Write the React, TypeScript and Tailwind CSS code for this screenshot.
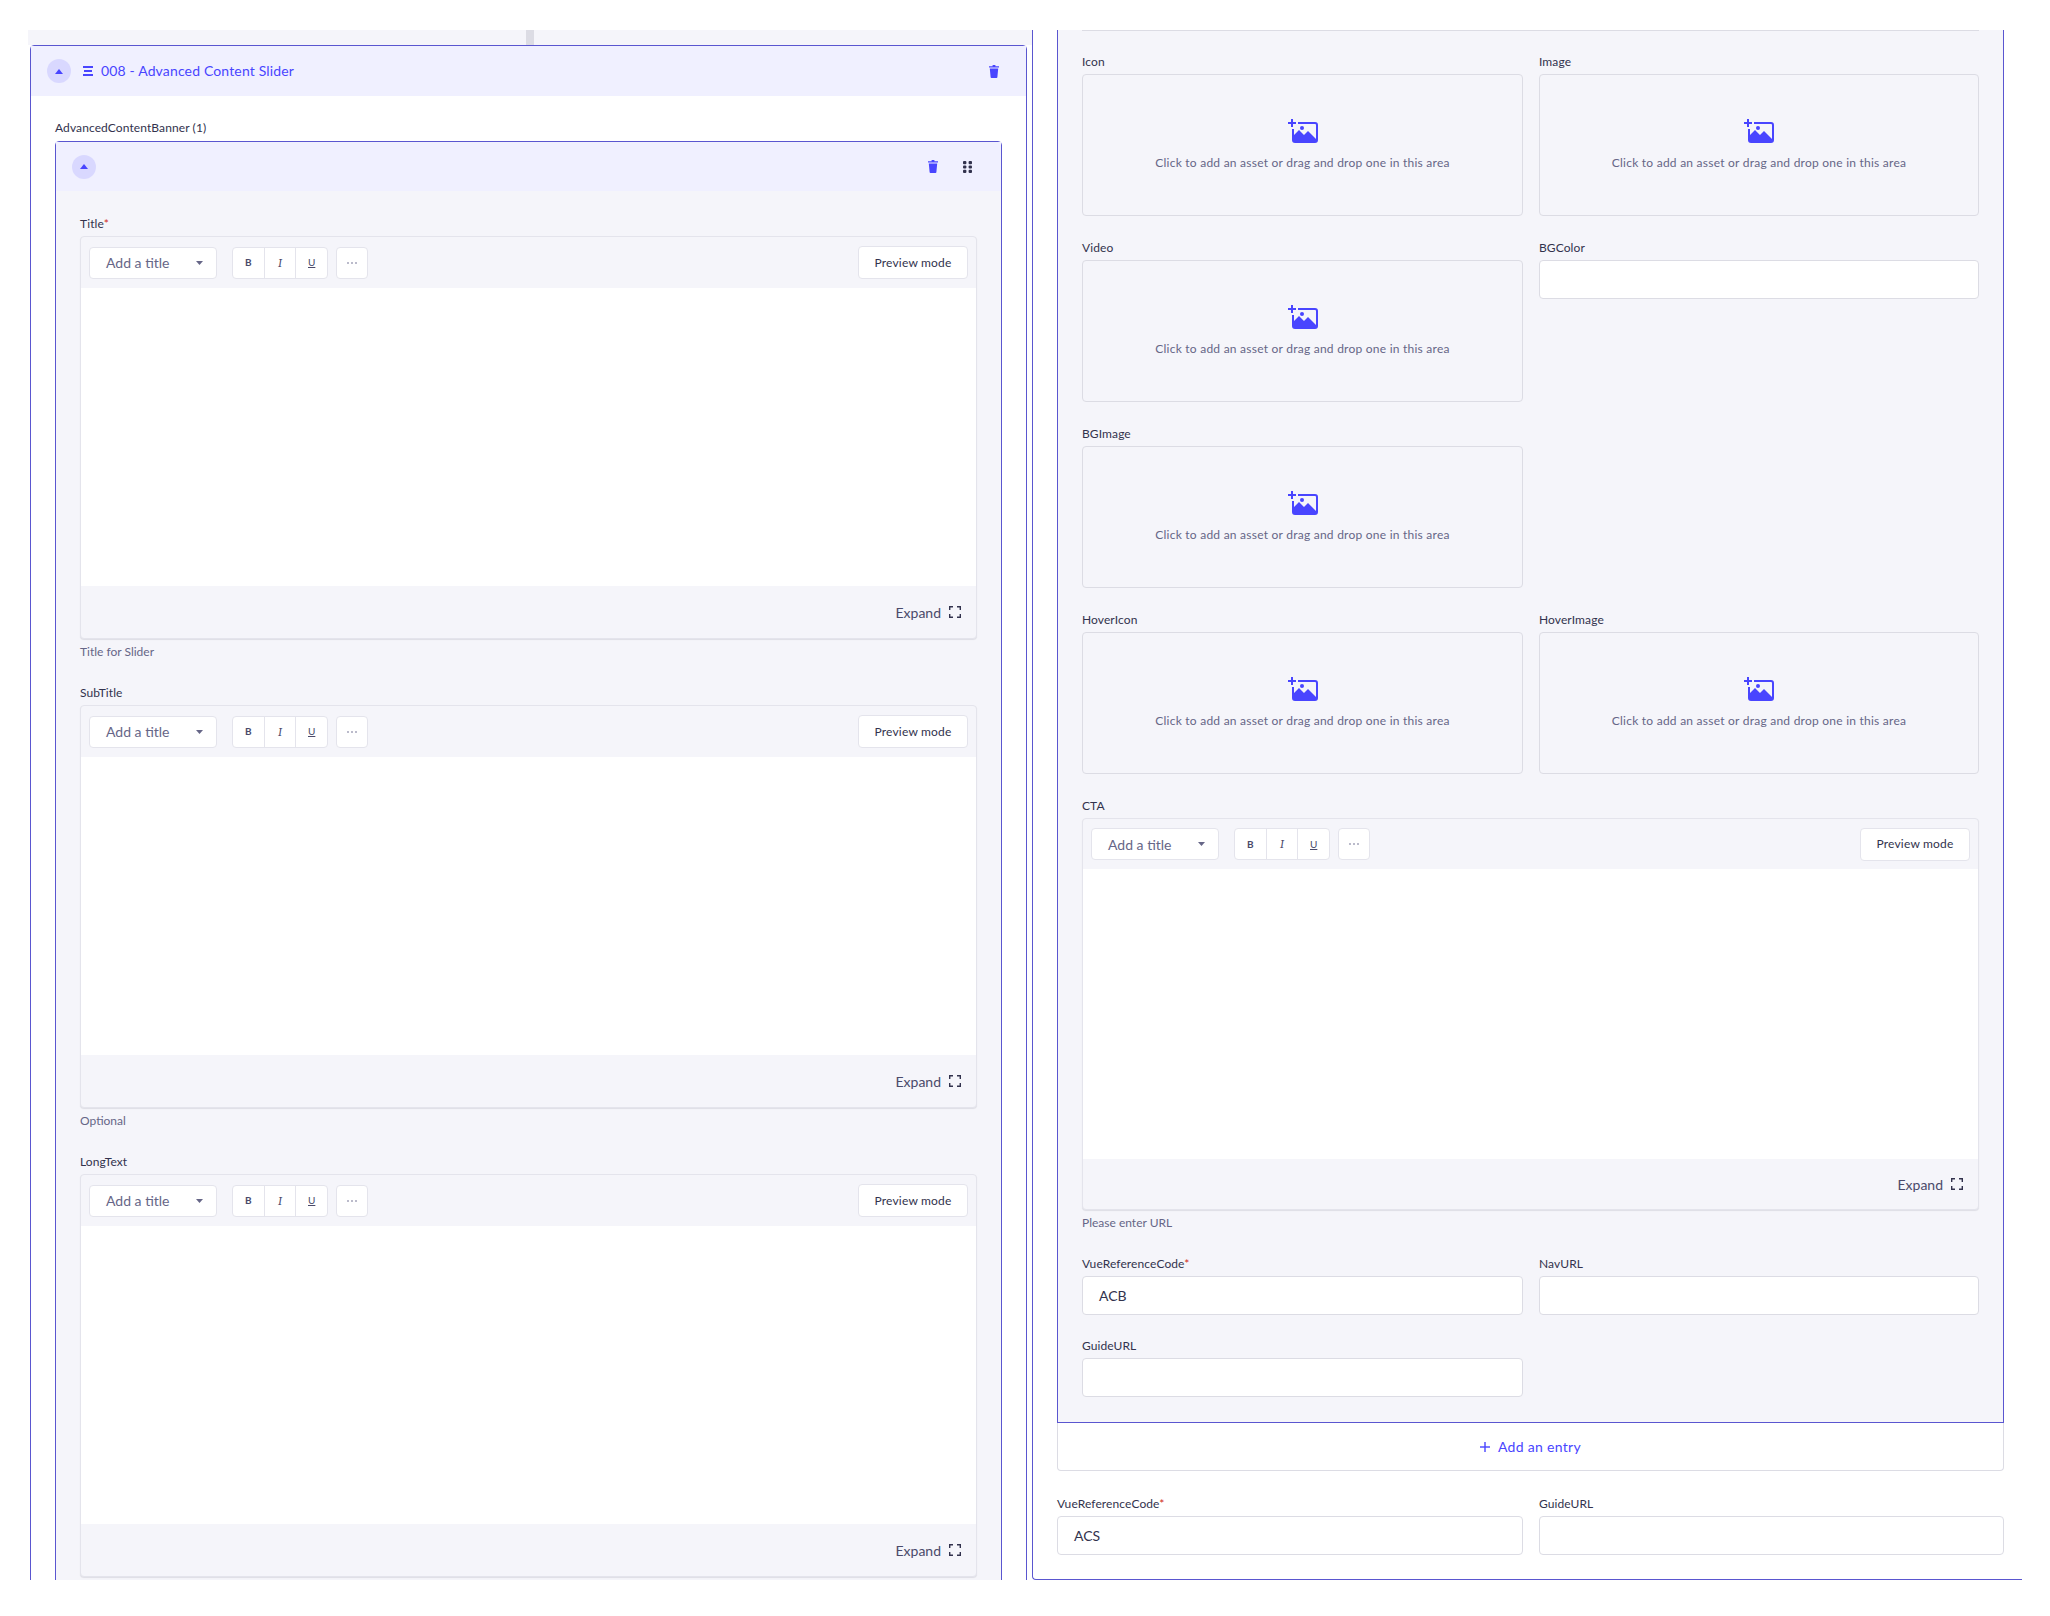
import { ReactNode } from "react";

function Caret() {
  return (
    <svg width="8" height="5" viewBox="0 0 8 5">
      <path d="M4 0L8 5H0z" fill="#4945ff" />
    </svg>
  );
}

function Trash({ className }: { className?: string }) {
  return (
    <svg width="10" height="13" viewBox="0 0 10 13" className={className}>
      <path d="M3.6 0h2.8v1.2H10v1.4H0V1.2h3.6z" fill="#4945ff" />
      <path d="M.8 3.6h8.4l-.8 8.5a.9.9 0 0 1-.9.9H2.500a.9.9 0 0 1-.9-.9z" fill="#4945ff" />
    </svg>
  );
}

function Drag() {
  return (
    <svg width="9" height="12" viewBox="0 0 9 12" fill="#32324d">
      <rect x="0" y="0" width="3.4" height="3.2" rx="1" />
      <rect x="5.6" y="0" width="3.4" height="3.2" rx="1" />
      <rect x="0" y="4.4" width="3.4" height="3.2" rx="1" />
      <rect x="5.6" y="4.4" width="3.4" height="3.2" rx="1" />
      <rect x="0" y="8.8" width="3.4" height="3.2" rx="1" />
      <rect x="5.6" y="8.8" width="3.4" height="3.2" rx="1" />
    </svg>
  );
}

function ImagePlus() {
  return (
    <svg width="30" height="24" viewBox="0 0 30 24" fill="none">
      <path d="M3 0h2v3h3v2H5v3H3V5H0V3h3z" fill="#4945ff" />
      <path
        d="M10 3h17a3 3 0 0 1 3 3v15a3 3 0 0 1-3 3H7a3 3 0 0 1-3-3V10h2v6l5-5 5 5 4-4 8 8V6a1 1 0 0 0-1-1H10z"
        fill="#4945ff"
      />
      <circle cx="14" cy="9" r="2" fill="#4945ff" />
    </svg>
  );
}

function ExpandIcon() {
  return (
    <svg width="12" height="12" viewBox="0 0 12 12" fill="none" stroke="#32324d" strokeWidth="1.4">
      <path d="M.7 4V.7H4M8 .7h3.3V4M11.3 8v3.3H8M4 11.3H.7V8" />
    </svg>
  );
}

function Label({ text, required }: { text: string; required?: boolean }) {
  return (
    <div className="h-[17px] pt-[1px] mb-[4px] text-[12px] leading-[16px] tracking-[0.1px] text-[#32324d]">
      {text}
      {required && <span className="text-[#d02b20]">*</span>}
    </div>
  );
}

function Hint({ text }: { text: string }) {
  return <div className="mt-[5px] h-[16px] text-[12px] leading-[16px] text-[#666687]">{text}</div>;
}

function RichText({ bodyClass, barClass, footClass }: { bodyClass: string; barClass: string; footClass: string }) {
  return (
    <div className="border border-[#e4e4ec] rounded-[4px] bg-[#f5f5fa] shadow-[0_1px_1px_rgba(33,33,52,0.1)]">
      <div className={`pl-[8px] pr-[8px] flex items-center justify-between ${barClass}`}>
        <div className="flex items-center">
          <div className="w-[128px] h-[32px] pl-[16px] pr-[13px] bg-white border border-[#e4e4ec] rounded-[4px] flex items-center justify-between text-[14px] text-[#666687]">
            <span>Add a title</span>
            <svg width="7" height="4" viewBox="0 0 7 4">
              <path d="M0 0h7L3.5 4z" fill="#666687" />
            </svg>
          </div>
          <div className="ml-[15px] w-[96px] h-[32px] bg-white border border-[#e4e4ec] rounded-[4px] flex text-[10px] text-[#4a4a6a]">
            <span className="flex-1 flex items-center justify-center border-r border-[#e4e4ec] font-bold">B</span>
            <span className="flex-1 flex items-center justify-center border-r border-[#e4e4ec] italic font-serif text-[12px]">I</span>
            <span className="flex-1 flex items-center justify-center underline">U</span>
          </div>
          <div className="ml-[8px] w-[32px] h-[32px] bg-white border border-[#e4e4ec] rounded-[4px] flex items-center justify-center gap-[2px]">
            <span className="w-[2px] h-[2px] rounded-full bg-[#a5a5ba]" />
            <span className="w-[2px] h-[2px] rounded-full bg-[#a5a5ba]" />
            <span className="w-[2px] h-[2px] rounded-full bg-[#a5a5ba]" />
          </div>
        </div>
        <div className="w-[110px] h-[33px] bg-white border border-[#e4e4ec] rounded-[4px] flex items-center justify-center text-[12px] tracking-[0.2px] text-[#32324d]">
          Preview mode
        </div>
      </div>
      <div className={`bg-white ${bodyClass}`} />
      <div className={`pr-[15px] flex items-center justify-end gap-[8px] text-[14px] text-[#4a4a6a] ${footClass}`}>
        <span>Expand</span>
        <ExpandIcon />
      </div>
    </div>
  );
}

function Asset({ label }: { label: string }) {
  return (
    <div>
      <Label text={label} />
      <div className="h-[142px] border border-[#dcdce4] rounded-[4px] bg-[#f5f5fa] flex flex-col items-center pt-[44px]">
        <ImagePlus />
        <div className="mt-[12px] text-[12px] leading-[16px] tracking-[0.24px] text-[#666687]">
          Click to add an asset or drag and drop one in this area
        </div>
      </div>
    </div>
  );
}

function Input({ label, value, required }: { label: string; value?: string; required?: boolean }) {
  return (
    <div>
      <Label text={label} required={required} />
      <div className="h-[39px] pl-[16px] bg-white border border-[#dcdce4] rounded-[4px] flex items-center text-[14px] text-[#32324d]">
        {value}
      </div>
    </div>
  );
}

function Field({ label, required, hint, bodyClass, barClass, footClass, children }: { label: string; required?: boolean; hint?: string; bodyClass: string; barClass: string; footClass: string; children?: ReactNode }) {
  return (
    <div className="mb-[24px]">
      <Label text={label} required={required} />
      <RichText bodyClass={bodyClass} barClass={barClass} footClass={footClass} />
      {hint && <Hint text={hint} />}
      {children}
    </div>
  );
}

export default function App() {
  return (
    <div className="h-[1616px] bg-white font-['Lato',sans-serif]">
      <div className="h-[1580px] overflow-hidden flex pl-[28px] pt-[30px]">
        {/* left column */}
        <div className="w-[1004px] shrink-0">
          <div className="h-[15px] bg-[#f5f5fa] flex justify-center">
            <div className="w-[8px] bg-[#dcdce4]" />
          </div>
          <div className="ml-[2px] w-[997px] border border-[#5a56d0] rounded-t-[4px]">
            <div className="h-[50px] bg-[#f0f0ff] pl-[16px] pr-[27px] flex items-center">
              <div className="w-[24px] h-[24px] rounded-full bg-[#d9d8ff] flex items-center justify-center">
                <Caret />
              </div>
              <svg className="ml-[12px]" width="10" height="10" viewBox="0 0 10 10" fill="#4945ff">
                <rect x="0" y="0" width="10" height="2" />
                <rect x="1" y="4" width="8" height="2" />
                <rect x="0" y="8" width="10" height="2" />
              </svg>
              <span className="ml-[8px] text-[14px] tracking-[0.15px] text-[#4945ff] -translate-y-px">008 - Advanced Content Slider</span>
              <Trash className="ml-auto" />
            </div>
            <div className="px-[24px] pt-[24px] bg-white">
              <div className="h-[16px] mb-[5px] text-[12px] leading-[16px] tracking-[0.1px] text-[#32324d]">AdvancedContentBanner (1)</div>
              <div className="border border-[#5a56d0] rounded-t-[4px] bg-[#f5f5fa]">
                <div className="h-[49px] bg-[#f0f0ff] pl-[16px] pr-[29px] flex items-center">
                  <div className="w-[24px] h-[24px] rounded-full bg-[#d9d8ff] flex items-center justify-center">
                    <Caret />
                  </div>
                  <Trash className="ml-auto" />
                  <div className="ml-[25px]">
                    <Drag />
                  </div>
                </div>
                <div className="px-[24px] pt-[24px]">
                  <Field label="Title" required hint="Title for Slider" bodyClass="h-[298px]" barClass="h-[51px]" footClass="h-[52px]" />
                  <Field label="SubTitle" hint="Optional" bodyClass="h-[298px]" barClass="h-[51px]" footClass="h-[52px]" />
                  <Field label="LongText" bodyClass="h-[298px]" barClass="h-[51px]" footClass="h-[52px]" />
                </div>
              </div>
            </div>
          </div>
        </div>

        {/* right column */}
        <div className="w-[990px] shrink-0 h-[1550px] border-l border-b border-[#5a56d0] rounded-bl-[4px] pl-[24px] pr-[18px]">
          <div className="w-[947px] bg-[#f5f5fa] border-x border-b border-[#5a56d0] px-[24px] pb-[25px]">
            <div className="h-px bg-[#dcdce4] mb-[22px]" />
            <div className="grid grid-cols-[441px_1fr] gap-x-[16px] gap-y-[23px]">
              <Asset label="Icon" />
              <Asset label="Image" />
              <Asset label="Video" />
              <Input label="BGColor" />
              <Asset label="BGImage" />
              <div />
              <Asset label="HoverIcon" />
              <Asset label="HoverImage" />
            </div>
            <div className="mt-[23px]">
              <Field label="CTA" hint="Please enter URL" bodyClass="h-[290px]" barClass="h-[50px]" footClass="h-[50px]" />
            </div>
            <div className="grid grid-cols-[441px_1fr] gap-x-[16px] gap-y-[22px]">
              <Input label="VueReferenceCode" value="ACB" required />
              <Input label="NavURL" />
              <Input label="GuideURL" />
            </div>
          </div>
          <div className="w-[947px] h-[48px] bg-white border-x border-b border-[#dcdce4] rounded-b-[4px] flex items-center justify-center gap-[8px] text-[14px] tracking-[0.3px] text-[#4945ff]">
            <svg width="10" height="10" viewBox="0 0 10 10" fill="#4945ff">
              <rect x="4.3" y="0" width="1.4" height="10" />
              <rect x="0" y="4.3" width="10" height="1.4" />
            </svg>
            Add an entry
          </div>
          <div className="w-[947px] mt-[24px] grid grid-cols-[466px_1fr] gap-x-[16px]">
            <Input label="VueReferenceCode" value="ACS" required />
            <Input label="GuideURL" />
          </div>
        </div>
      </div>
    </div>
  );
}
